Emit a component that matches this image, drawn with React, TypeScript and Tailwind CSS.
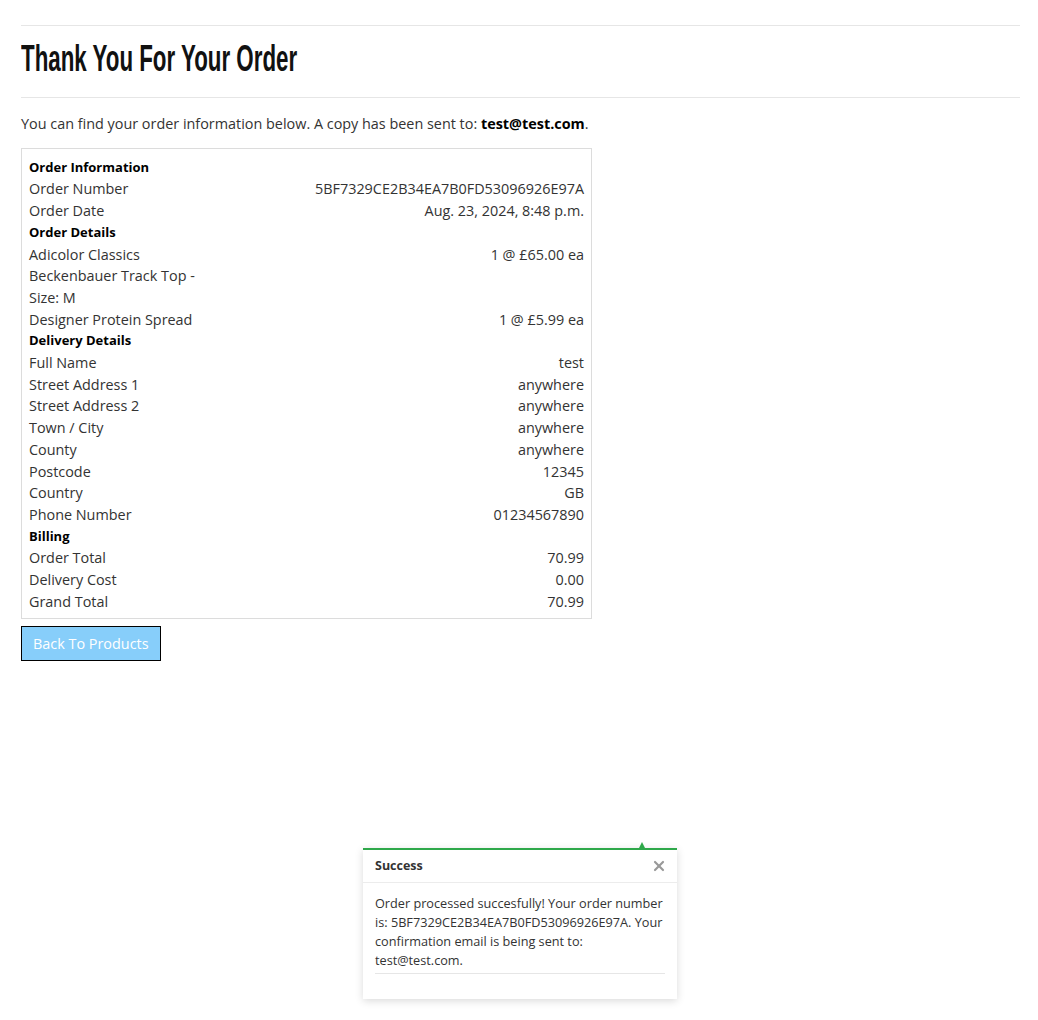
import { X } from 'lucide-react';

const rows: { label: string; value?: string; head?: boolean }[] = [
  { label: 'Order Information', head: true },
  { label: 'Order Number', value: '5BF7329CE2B34EA7B0FD53096926E97A' },
  { label: 'Order Date', value: 'Aug. 23, 2024, 8:48 p.m.' },
  { label: 'Order Details', head: true },
  { label: 'Adicolor Classics Beckenbauer Track Top - Size: M', value: '1 @ £65.00 ea' },
  { label: 'Designer Protein Spread', value: '1 @ £5.99 ea' },
  { label: 'Delivery Details', head: true },
  { label: 'Full Name', value: 'test' },
  { label: 'Street Address 1', value: 'anywhere' },
  { label: 'Street Address 2', value: 'anywhere' },
  { label: 'Town / City', value: 'anywhere' },
  { label: 'County', value: 'anywhere' },
  { label: 'Postcode', value: '12345' },
  { label: 'Country', value: 'GB' },
  { label: 'Phone Number', value: '01234567890' },
  { label: 'Billing', head: true },
  { label: 'Order Total', value: '70.99' },
  { label: 'Delivery Cost', value: '0.00' },
  { label: 'Grand Total', value: '70.99' },
];

export default function App() {
  return (
    <div className="min-h-[1020px] bg-white font-['Open_Sans',sans-serif] text-[14.4px] leading-[21.7px] text-[#333]">
      <div className="pl-[21px] pr-[18px] pt-[25px]">
        <hr className="border-t border-[#e6e6e6]" />
        <h1 className="mt-[15px] mb-[21px] h-[35px] whitespace-nowrap font-['Liberation_Sans',Arial,sans-serif] font-bold text-[36px] leading-[35px] text-[#111]">
          <span className="inline-block origin-left scale-x-[0.62]">Thank You For Your Order</span>
        </h1>
        <hr className="border-t border-[#e6e6e6]" />
        <p className="mt-[15px]">
          You can find your order information below. A copy has been sent to: <strong className="text-black">test@test.com</strong>.
        </p>
        <div className="mt-[13px] w-[571px] border border-[#dcdcdc] px-[7px] pt-[8px] pb-[6px]">
          {rows.map((r, i) =>
            r.head ? (
              <div key={i} className="font-bold text-[13px] text-black">{r.label}</div>
            ) : (
              <div key={i} className="flex">
                <div className="w-[185px] shrink-0">{r.label}</div>
                <div className="flex-1 text-right">{r.value}</div>
              </div>
            )
          )}
        </div>
        <button className="mt-[7px] h-[35px] px-[11px] bg-[#87cefa] border border-black text-white text-[14.4px]">
          Back To Products
        </button>
      </div>

      <div className="flex justify-center mt-[187px]">
        <div className="relative w-[314px] ml-[2px] bg-white border-t-2 border-[#2ea84a] shadow-[0_2px_8px_rgba(0,0,0,0.15)]">
          <div className="absolute right-[32px] top-[-8px] w-0 h-0 border-l-[3px] border-r-[3px] border-b-[6px] border-l-transparent border-r-transparent border-b-[#2ea84a]" />
          <div className="flex items-start justify-between pl-[12px] pr-[10px] pt-[6px] h-[33px] border-b border-[#ececec]">
            <span className="font-bold text-[12.5px] leading-[19px] text-[#333]">Success</span>
            <X size={16} strokeWidth={3.2} className="text-[#999] mt-[2px]" />
          </div>
          <div className="px-[12px] pt-[11px] pb-[25px] text-[12.7px] leading-[19px]">
            <p className="pb-[3px] border-b border-[#e6e6e6]">
              Order processed succesfully! Your order number is: 5BF7329CE2B34EA7B0FD53096926E97A. Your confirmation email is being sent to: test@test.com.
            </p>
          </div>
        </div>
      </div>
    </div>
  );
}
